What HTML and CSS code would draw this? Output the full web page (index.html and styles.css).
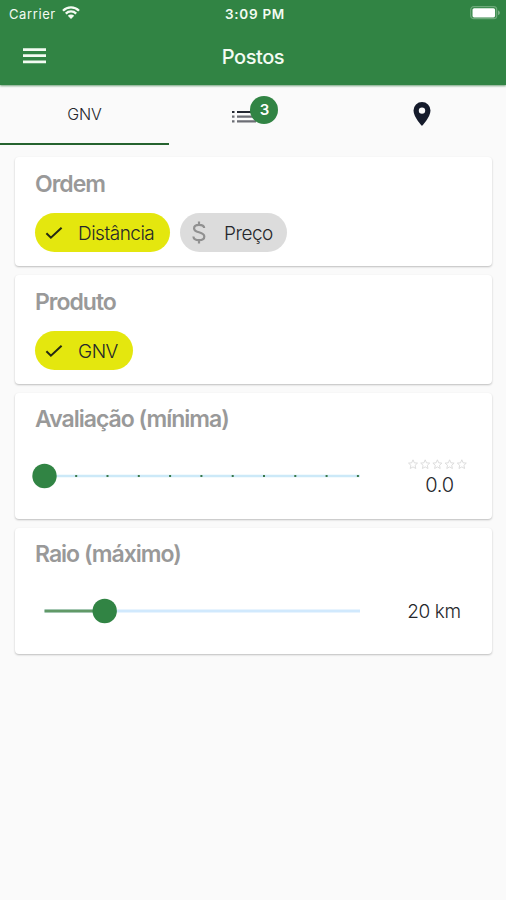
FILE: index.html
```html
<!DOCTYPE html>
<html lang="pt-BR">
<head>
<meta charset="utf-8">
<meta name="viewport" content="width=device-width, initial-scale=1">
<title>Postos</title>
<link rel="stylesheet" href="styles.css">
</head>
<body>
<header class="header">
  <div class="status">
    <div class="status-left"><span class="carrier">Carrier</span>
      <svg class="wifi" viewBox="0 0 18 13"><path d="M1 4.7a11.4 11.4 0 0 1 16 0M3.8 7.6a7.4 7.4 0 0 1 10.4 0" fill="none" stroke="currentColor" stroke-width="2.3"/><path d="M9 13 5.8 9.8a4.5 4.5 0 0 1 6.4 0z" fill="currentColor"/></svg>
    </div>
    <span class="time">3:09 PM</span>
    <svg class="battery" viewBox="0 0 31 14"><rect x=".7" y=".7" width="26" height="12" rx="3" fill="none" stroke="#6eaa7a" stroke-width="1.2"/><rect x="2.5" y="2.2" width="22.6" height="9.2" rx="1.6" fill="#fff"/><path d="M28.2 4.4c2 .6 2 4 0 4.6z" fill="#8fbd98"/></svg>
  </div>
  <div class="navbar">
    <svg class="menu" viewBox="0 0 24 16"><path d="M0 1.7h23M0 7.7h23M0 13.8h23" stroke="currentColor" stroke-width="2.7"/></svg>
    <h1 class="title">Postos</h1>
  </div>
</header>
<nav class="tabs">
  <div class="tab active"><span>GNV</span></div>
  <div class="tab">
    <div class="list-wrap">
      <svg class="list" viewBox="0 0 24 14"><path d="M0 2h2.5M5 2h19" stroke="#242832" stroke-width="2.1"/><path d="M0 6.7h2.5M5 6.7h19M0 11.4h2.5M5 11.4h19" stroke="#6c6e75" stroke-width="2.2"/></svg>
      <span class="badge">3</span>
    </div>
  </div>
  <div class="tab">
    <svg class="pin" viewBox="0 0 18 24"><path fill-rule="evenodd" d="M9 0a8.5 8.5 0 0 0-8.5 8.5C.5 15 9 24 9 24s8.500-9 8.500-15.500A8.500 8.500 0 0 0 9 0zm0 5.400a3.200 3.200 0 1 1 0 6.400 3.200 3.200 0 0 1 0-6.400z" fill="#151b2b"/></svg>
  </div>
</nav>
<main class="cards">
  <section class="card order">
    <h2>Ordem</h2>
    <div class="chips">
      <div class="chip distance"><svg viewBox="0 0 18 14"><path d="m1.400 7.200 4.500 4.500L16.600 1.700" fill="none" stroke="#242914" stroke-width="2"/></svg><span>Distância</span></div>
      <div class="chip price"><svg class="dollar" viewBox="0 0 14 23"><path d="M12.200 7C12 4.800 10 3.900 7 3.900c-3 0-4.900 1.300-4.900 3.500 0 2.300 2 3.100 4.900 3.900s5.300 1.500 5.300 4.200c0 2.300-2.200 3.700-5.300 3.700-3.300 0-5.400-1.300-5.600-3.700M7 .5v3.400m0 15.200v3.400" fill="none" stroke="#909090" stroke-width="2.200"/></svg><span>Preço</span></div>
    </div>
  </section>
  <section class="card product">
    <h2>Produto</h2>
    <div class="chips">
      <div class="chip gas"><svg viewBox="0 0 18 14"><path d="m1.400 7.200 4.500 4.500L16.600 1.700" fill="none" stroke="#242914" stroke-width="2"/></svg><span>GNV</span></div>
    </div>
  </section>
  <section class="card range rating">
    <h2>Avaliação (mínima)</h2>
    <div class="row">
      <svg class="slider" viewBox="0 0 330 26"><path d="M13 13h315" stroke="#cce9f8" stroke-width="2.600"/><path d="M43.200 13h2m29.300 0h2m29.300 0h2m29.300 0h2m29.300 0h2m29.300 0h2m29.300 0h2m29.300 0h2m29.300 0h2m29.300 0h2" stroke="#397849" stroke-width="2"/><circle cx="12.500" cy="13" r="12.200" fill="#318444"/></svg>
      <div class="value rating-value">
        <svg class="stars" viewBox="0 0 60 11"><defs><path id="star" d="m5 .8 1.300 3 3.200.3-2.400 2.200.7 3.200L5 7.900 2.200 9.500l.7-3.200L.5 4.100l3.200-.3z"/></defs><g fill="none" stroke="#d9d9d9" stroke-width=".9"><use href="#star"/><use href="#star" x="12.200"/><use href="#star" x="24.400"/><use href="#star" x="36.600"/><use href="#star" x="48.800"/></g></svg>
        <span class="score">0.0</span>
      </div>
    </div>
  </section>
  <section class="card range">
    <h2>Raio (máximo)</h2>
    <div class="row">
      <svg class="slider" viewBox="0 0 330 26"><path d="M12.500 13H328" stroke="#d1e9fd" stroke-width="3"/><path d="M12.500 13h60" stroke="#619967" stroke-width="3"/><circle cx="72.700" cy="13" r="12.200" fill="#318444"/></svg>
      <div class="value"><span class="distance-value">20 km</span></div>
    </div>
  </section>
</main>
</body>
</html>
```
FILE: styles.css
```css
* { box-sizing: border-box; }
body { margin: 0; min-height: 900px; background: #fafafa; font-family: Inter, "Liberation Sans", sans-serif; color: #25272b; }
svg { display: block; flex: none; }
span, h1, h2 { white-space: nowrap; }
.header { height: 85px; background: #318444; color: #f3fbf2; box-shadow: 0 1px 2px #729f7a; }
.status { height: 27px; display: grid; grid-template-columns: 1fr auto 1fr; align-items: center; padding: 0 5px 0 9px; font-size: 13px; line-height: 26px; }
.status-left { display: flex; align-items: center; gap: 6px; }
.carrier { letter-spacing: .6px; }
.wifi { width: 18px; height: 13px; margin-bottom: 3px; }
.time { font-weight: 600; font-size: 13.5px; letter-spacing: .7px; }
.battery { width: 31px; height: 14px; justify-self: end; margin-bottom: 2px; }
.navbar { height: 58px; display: grid; grid-template-columns: 1fr auto 1fr; align-items: center; padding: 0 23px; }
.menu { width: 24px; height: 16px; }
.title { margin: 0; font-size: 20px; line-height: 28px; font-weight: 500; letter-spacing: -.45px; padding-top: 1px; }
.tabs { height: 60px; display: grid; grid-template-columns: repeat(3, 1fr); }
.tab { display: flex; align-items: center; justify-content: center; padding-bottom: 3px; }
.tab.active { border-bottom: 2px solid #25632f; padding-bottom: 0; font-size: 16px; font-weight: 300; letter-spacing: -.15px; }
.list-wrap { position: relative; left: 1px; width: 43px; height: 28px; padding-top: 10px; }
.list { width: 24px; height: 14px; }
.badge { position: absolute; right: -3px; top: -4px; width: 28px; height: 28px; border-radius: 50%; background: #318444; color: #fff; text-align: center; font-size: 15px; line-height: 28px; font-weight: 600; }
.pin { width: 18px; height: 24px; margin-left: 1px; }
.cards { padding: 12px 14px 0 15px; display: flex; flex-direction: column; gap: 9px; }
.card { background: #fff; border-radius: 4px; box-shadow: 0 1px 2px #bdbdbd; padding: 13px 20px; }
.order { height: 109px; }
.product { height: 109px; }
.range { height: 126px; padding-top: 12px; }
.card h2 { margin: 0; color: #999; font-size: 23px; line-height: 28px; font-weight: 600; letter-spacing: -1px; }
.chips { display: flex; gap: 10px; margin-top: 15px; }
.chip { height: 39px; border-radius: 20px; background: #e4e70e; display: flex; align-items: center; padding-left: 10px; gap: 15px; font-size: 19px; font-weight: 300; letter-spacing: -.5px; }
.chip span { padding-top: 1px; }
.chip svg { width: 18px; height: 14px; }
.distance { width: 135px; }
.price { width: 107px; background: #dcdcdc; padding-left: 12px; gap: 18px; }
.chip .dollar { width: 14px; height: 23px; }
.gas { width: 98px; }
.row { height: 58px; display: flex; align-items: center; justify-content: space-between; margin: 14px -8px 0 -3px; }
.slider { width: 330px; height: 26px; }
.value { width: 93px; display: flex; flex-direction: column; align-items: center; }
.rating-value { padding: 5px 0 0 9px; }
.stars { width: 60px; height: 11px; }
.score { font-size: 20px; font-weight: 300; line-height: 28px; margin: 1px 0 0 3px; letter-spacing: -.3px; }
.distance-value { font-size: 19px; font-weight: 300; line-height: 28px; letter-spacing: -.4px; padding: 1px 0 0 1px; }
```
